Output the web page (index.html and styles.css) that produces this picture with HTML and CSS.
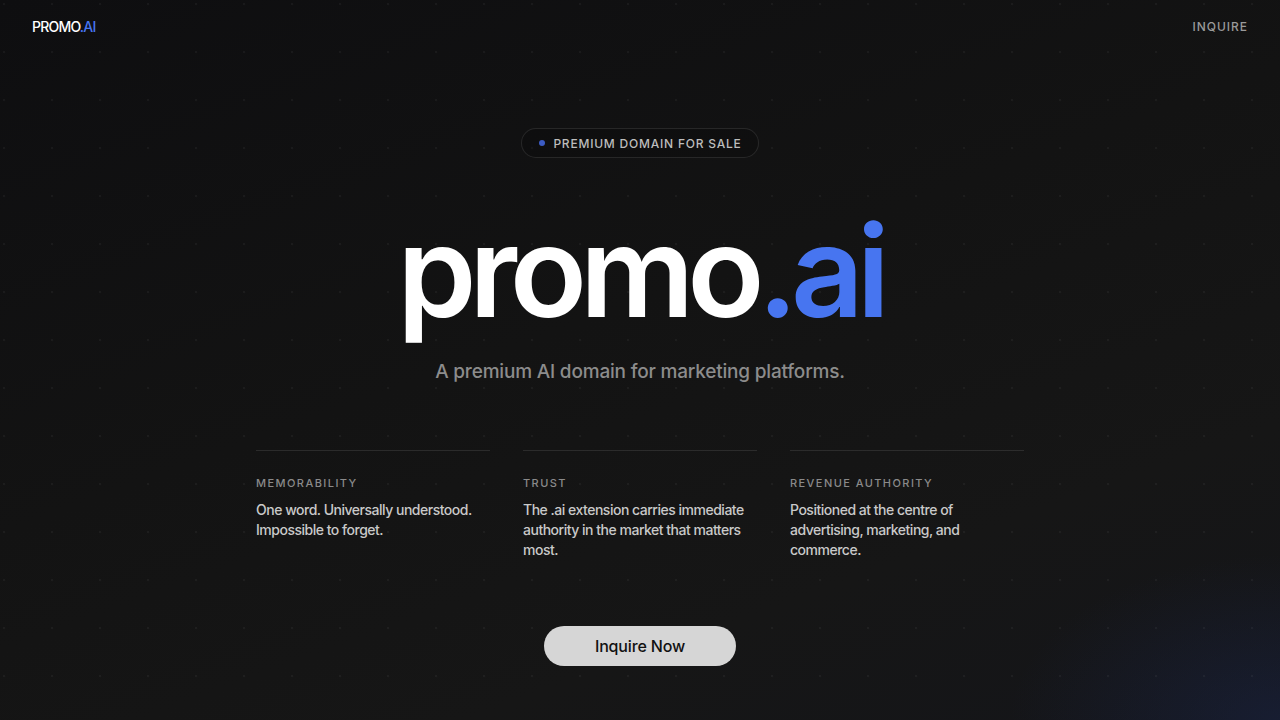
FILE: index.html
```html
<!DOCTYPE html>
<html lang="en">
<head>
<meta charset="utf-8">
<title>promo.ai</title>
<link rel="stylesheet" href="styles.css">
</head>
<body>
<div class="page">
  <header class="nav">
    <div class="logo">PROMO<span class="accent">.AI</span></div>
    <a class="nav-link" href="#">INQUIRE</a>
  </header>
  <main class="hero">
    <div class="badge"><span class="badge-dot"></span>PREMIUM DOMAIN FOR SALE</div>
    <h1 class="title">promo<span class="accent">.ai</span></h1>
    <p class="subtitle">A premium AI domain for marketing platforms.</p>
    <section class="features">
      <div class="feature">
        <div class="feature-label">MEMORABILITY</div>
        <p class="feature-text">One word. Universally understood. Impossible to forget.</p>
      </div>
      <div class="feature">
        <div class="feature-label">TRUST</div>
        <p class="feature-text">The .ai extension carries immediate authority in the market that matters most.</p>
      </div>
      <div class="feature">
        <div class="feature-label">REVENUE AUTHORITY</div>
        <p class="feature-text">Positioned at the centre of advertising, marketing, and commerce.</p>
      </div>
    </section>
    <a class="cta" href="#">Inquire Now</a>
  </main>
</div>
</body>
</html>
```
FILE: styles.css
```css
* { box-sizing: border-box; }
html, body { margin: 0; padding: 0; height: 100%; }
body {
  font-family: Inter, "Liberation Sans", sans-serif;
  color: #fff;
  background-color: #121213;
  overflow: hidden;
}
.page {
  width: 1280px;
  height: 720px;
  position: relative;
  background:
    radial-gradient(circle at 1px 1px, rgba(255,255,255,0.045) 1.2px, transparent 1.6px) 3px 3px / 48px 48px,
    radial-gradient(ellipse 360px 220px at 100% 100%, rgba(30,45,95,0.35), transparent 75%),
    linear-gradient(160deg, #0e0e10 0%, #131313 45%, #161616 75%, #141519 100%);
}
.accent { color: #4775f0; }
.nav {
  height: 52px;
  padding: 0 32px;
  display: flex;
  align-items: center;
  justify-content: space-between;
}
.logo {
  font-size: 14px;
  font-weight: 500;
  letter-spacing: -0.055em;
  color: #fff;
}
.nav-link {
  font-size: 12px;
  letter-spacing: 0.08em;
  color: #9a9a9a;
  text-decoration: none;
  font-weight: 500;
}
.hero {
  display: flex;
  flex-direction: column;
  align-items: center;
  padding-top: 76px;
}
.badge {
  height: 30px;
  padding: 0 16px 0 17px;
  border: 1px solid rgba(255,255,255,0.1);
  border-radius: 999px;
  display: flex;
  align-items: center;
  gap: 8px;
  font-size: 12px;
  font-weight: 500;
  letter-spacing: 0.065em;
  color: #bdbdbd;
  background: rgba(0,0,0,0.15);
}
.badge-dot {
  width: 6px;
  height: 6px;
  border-radius: 50%;
  background: #3c5cc4;
}
.title {
  margin: 50px 0 0;
  font-size: 127px;
  line-height: 1;
  height: 127px;
  font-weight: 600;
  letter-spacing: -0.056em;
  color: #fff;
}
.subtitle {
  margin: 25px 0 0;
  font-size: 19px;
  line-height: 24px;
  color: #8c8c8c;
  font-weight: 500;
  letter-spacing: -0.01em;
}
.features {
  margin-top: 66px;
  width: 768px;
  display: grid;
  grid-template-columns: repeat(3, 1fr);
  gap: 33px;
}
.feature {
  border-top: 1px solid rgba(255,255,255,0.1);
  padding-top: 25px;
}
.feature-label {
  font-size: 11px;
  letter-spacing: 0.13em;
  color: #8a8a8a;
  font-weight: 500;
}
.feature-text {
  margin: 10px 0 0;
  font-size: 14px;
  line-height: 20px;
  color: #c9c9c9;
  font-weight: 500;
  letter-spacing: -0.035em;
}
.cta {
  margin-top: 66px;
  width: 192px;
  height: 40px;
  border-radius: 999px;
  background: #d6d6d6;
  color: #111;
  display: flex;
  align-items: center;
  justify-content: center;
  font-size: 16px;
  font-weight: 500;
  text-decoration: none;
  letter-spacing: -0.01em;
}
```
